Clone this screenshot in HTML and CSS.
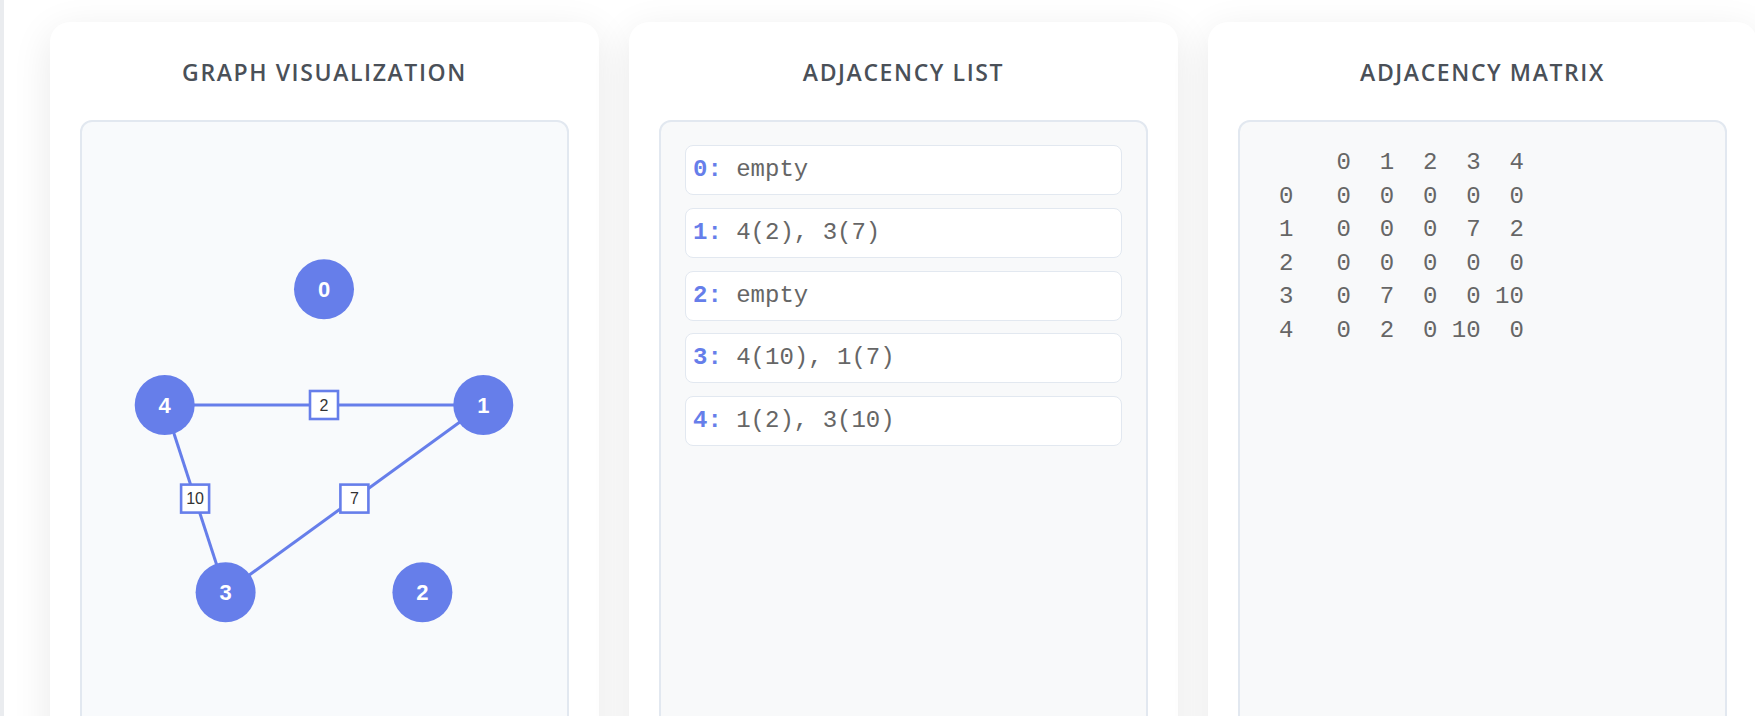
FILE: index.html
```html
<!DOCTYPE html>
<html lang="en">
<head>
<meta charset="utf-8">
<title>Graph Representations</title>
<link rel="stylesheet" href="styles.css">
</head>
<body>
<div class="page">
  <div class="strip"></div>
  <main class="board">
    <section class="card">
      <h2 class="card-title">Graph Visualization</h2>
      <div class="panel panel-graph">
        <svg class="graph" width="484" height="640" viewBox="0 0 484 640" xmlns="http://www.w3.org/2000/svg">
          <g class="edges">
            <line x1="401.3" y1="283" x2="82.7" y2="283"/>
            <line x1="401.3" y1="283" x2="143.6" y2="470.3"/>
            <line x1="143.6" y1="470.3" x2="82.7" y2="283"/>
          </g>
          <g class="weights">
            <rect x="228" y="269" width="28" height="28"/>
            <text x="242" y="283">2</text>
            <rect x="258.4" y="362.6" width="28" height="28"/>
            <text x="272.4" y="376.6">7</text>
            <rect x="99.1" y="362.6" width="28" height="28"/>
            <text x="113.1" y="376.6">10</text>
          </g>
          <g class="nodes">
            <circle cx="242" cy="167.3" r="30"/>
            <text x="242" y="167.3">0</text>
            <circle cx="401.3" cy="283" r="30"/>
            <text x="401.3" y="283">1</text>
            <circle cx="340.4" cy="470.3" r="30"/>
            <text x="340.4" y="470.3">2</text>
            <circle cx="143.6" cy="470.3" r="30"/>
            <text x="143.6" y="470.3">3</text>
            <circle cx="82.7" cy="283" r="30"/>
            <text x="82.7" y="283">4</text>
          </g>
        </svg>
      </div>
    </section>
    <section class="card">
      <h2 class="card-title">Adjacency List</h2>
      <div class="panel panel-list">
        <div class="adj-item"><span class="adj-key">0:</span> empty</div>
        <div class="adj-item"><span class="adj-key">1:</span> 4(2), 3(7)</div>
        <div class="adj-item"><span class="adj-key">2:</span> empty</div>
        <div class="adj-item"><span class="adj-key">3:</span> 4(10), 1(7)</div>
        <div class="adj-item"><span class="adj-key">4:</span> 1(2), 3(10)</div>
      </div>
    </section>
    <section class="card">
      <h2 class="card-title">Adjacency Matrix</h2>
      <div class="panel panel-matrix">
<pre class="matrix">    0  1  2  3  4
0   0  0  0  0  0
1   0  0  0  7  2
2   0  0  0  0  0
3   0  7  0  0 10
4   0  2  0 10  0</pre>
      </div>
    </section>
  </main>
</div>
</body>
</html>
```
FILE: styles.css
```css
html, body {
  margin: 0;
  padding: 0;
  height: 100%;
  overflow: hidden;
  background: #ffffff;
}

.page {
  display: flex;
  min-height: 100%;
}

.strip {
  width: 4px;
  flex-shrink: 0;
  background: #eaecef;
}

.board {
  display: flex;
  gap: 30px;
  padding: 22px 0 0 46px;
  align-items: flex-start;
}

.card {
  flex: 0 0 549px;
  box-sizing: border-box;
  width: 549px;
  height: 760px;
  padding: 30px;
  background: #ffffff;
  border-radius: 20px;
  box-shadow: 0 10px 40px rgba(0, 0, 0, 0.09);
}

.card-title {
  margin: 4px 0 32px;
  height: 32px;
  line-height: 32px;
  text-align: center;
  text-transform: uppercase;
  font-family: "Open Sans", "Noto Sans", sans-serif;
  font-size: 23px;
  font-weight: 600;
  letter-spacing: 1.6px;
  color: #4a5058;
}

.panel {
  box-sizing: border-box;
  height: 660px;
  border: 2px solid #e2e8f0;
  border-radius: 12px;
}

.panel-graph {
  background: #f8fafc;
}

.graph {
  display: block;
}

.edges line {
  stroke: #667eea;
  stroke-width: 3;
}

.weights rect {
  fill: #ffffff;
  stroke: #667eea;
  stroke-width: 2.6;
}

.weights text {
  fill: #333333;
  font-family: "Liberation Sans", Arial, sans-serif;
  font-size: 16px;
  text-anchor: middle;
  dominant-baseline: central;
}

.nodes circle {
  fill: #667eea;
}

.nodes text {
  fill: #ffffff;
  font-family: "Liberation Sans", Arial, sans-serif;
  font-size: 22px;
  font-weight: bold;
  text-anchor: middle;
  dominant-baseline: central;
}

.panel-list {
  background: #f8f9fa;
  padding: 23px 24px;
  display: flex;
  flex-direction: column;
  gap: 12.75px;
}

.adj-item {
  box-sizing: border-box;
  height: 50px;
  padding: 10px 7px;
  line-height: 28px;
  background: #ffffff;
  border: 1px solid #e2e8f0;
  border-radius: 8px;
  font-family: "Liberation Mono", "Courier New", monospace;
  font-size: 24px;
  color: #666666;
  white-space: pre;
}

.adj-key {
  color: #667eea;
  font-weight: bold;
}

.panel-matrix {
  background: #f8f9fa;
  padding: 24px;
}

.matrix {
  margin: 0;
  padding: 0 15px;
  font-family: "Liberation Mono", "Courier New", monospace;
  font-size: 24px;
  line-height: 33.6px;
  color: #666666;
}
```
